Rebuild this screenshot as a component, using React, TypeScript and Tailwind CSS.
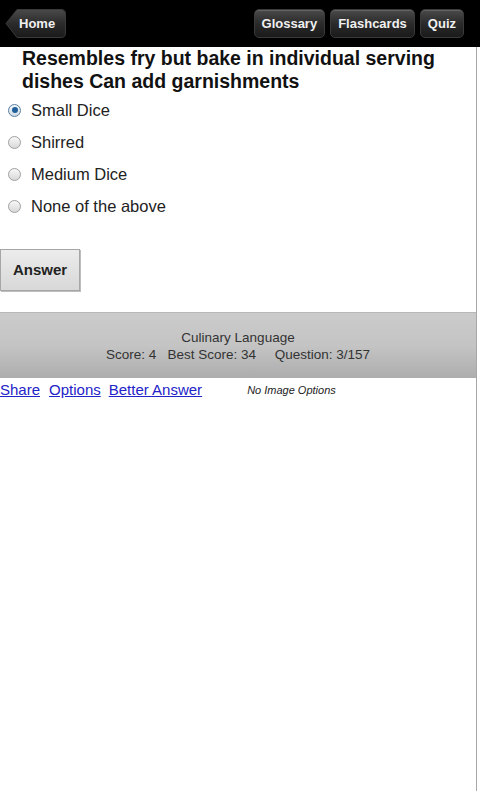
import React, { useState } from 'react';

const options = ['Small Dice', 'Shirred', 'Medium Dice', 'None of the above'];

function NavButton({ label }: { label: string }) {
  return (
    <button className="h-[29px] px-[7px] rounded-[5px] border border-[#3a3a3a] bg-gradient-to-b from-[#4a4a4a] via-[#2b2b2b] to-[#1a1a1a] text-[13px] font-bold text-[#f0f0f0] shadow-[inset_0_1px_0_rgba(255,255,255,0.15)]">
      {label}
    </button>
  );
}

export default function App() {
  const [selected, setSelected] = useState(0);

  return (
    <div className="relative w-[480px] h-[800px] bg-white font-['Liberation_Sans',Arial,sans-serif] text-[#111]">
      <div className="h-[47px] bg-black flex items-center px-[5px]">
        <button className="relative h-[29px] pl-[14px] pr-[8px] text-[13px] font-bold text-[#f0f0f0]">
          <svg className="absolute left-0 top-0" width="61" height="29" viewBox="0 0 61 29">
            <defs>
              <linearGradient id="hg" x1="0" y1="0" x2="0" y2="1">
                <stop offset="0" stopColor="#4a4a4a" />
                <stop offset="0.5" stopColor="#2b2b2b" />
                <stop offset="1" stopColor="#1a1a1a" />
              </linearGradient>
            </defs>
            <path d="M1 14.5 L12 0.5 H56 Q60.5 0.5 60.5 5 V24 Q60.5 28.5 56 28.5 H12 Z" fill="url(#hg)" stroke="#3a3a3a" />
          </svg>
          <span className="relative">Home</span>
        </button>
        <div className="ml-auto flex gap-[5px] mr-[11px]">
          <NavButton label="Glossary" />
          <NavButton label="Flashcards" />
          <NavButton label="Quiz" />
        </div>
      </div>

      <div className="border-r border-[#a8a8a8] w-[477px] h-[744px]">
        <h1 className="pl-[22px] pr-[10px] text-[19.5px] leading-[23px] font-bold text-[#111]">
          Resembles fry but bake in individual serving dishes Can add garnishments
        </h1>

        <div className="mt-[1px] flex flex-col">
          {options.map((o, i) => (
            <label key={o} className="flex items-center h-[32px] cursor-pointer" onClick={() => setSelected(i)}>
              <span
                className={
                  'ml-[8px] w-[13px] h-[13px] rounded-full border flex items-center justify-center ' +
                  (selected === i
                    ? 'border-[#5a7ea0] bg-gradient-to-b from-[#f4f8fb] to-[#cfdbe6]'
                    : 'border-[#a0a0a0] bg-gradient-to-b from-[#f8f8f8] to-[#d8d8d8]')
                }
              >
                {selected === i && <span className="w-[6px] h-[6px] rounded-full bg-[#1f5f9a]" />}
              </span>
              <span className="ml-[10px] text-[16.5px] text-[#222]">{o}</span>
            </label>
          ))}
        </div>

        <button className="mt-[27px] h-[42px] w-[80px] border border-[#a6a6a6] bg-gradient-to-b from-[#ececec] to-[#d8d8d8] text-[15px] font-bold text-[#222] shadow-[1px_1px_0_#bdbdbd]">
          Answer
        </button>

        <div className="mt-[21px] h-[66px] bg-gradient-to-b from-[#cbcbcb] via-[#c4c4c4] to-[#adadad] border-t border-[#b8b8b8] flex flex-col items-center justify-center text-[13.5px] leading-[17px] text-[#333]">
          <div>Culinary Language</div>
          <div className="whitespace-pre">Score: 4   Best Score: 34     Question: 3/157</div>
        </div>

        <div className="flex items-center h-[24px] text-[15px] text-[#2323c8]">
          <a className="underline">Share</a>
          <a className="underline ml-[9px]">Options</a>
          <a className="underline ml-[8px]">Better Answer</a>
          <span className="ml-[45px] text-[11px] italic text-[#222]">No Image Options</span>
        </div>
      </div>
    </div>
  );
}
